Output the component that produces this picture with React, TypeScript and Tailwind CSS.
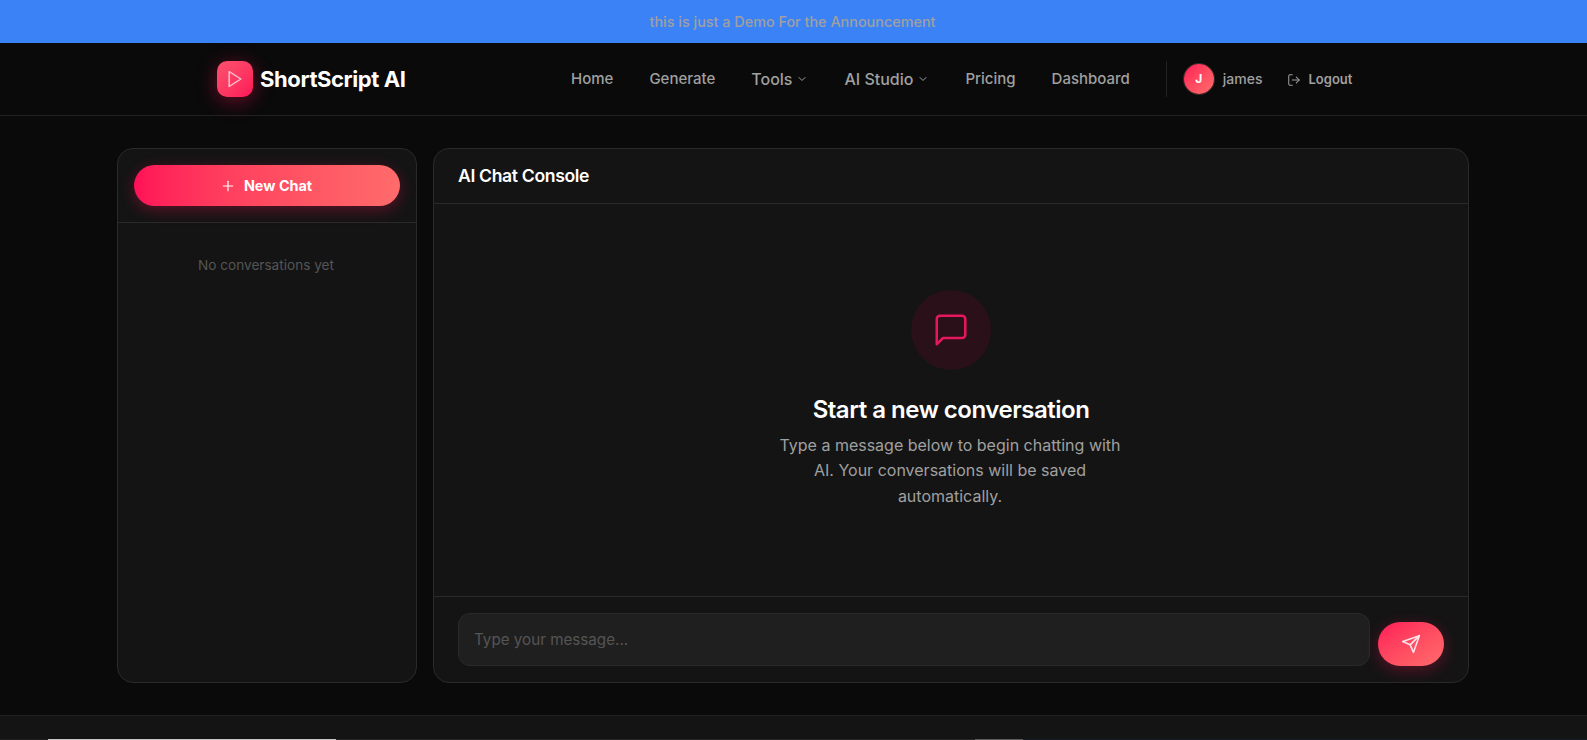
import { ChevronDown, LogOut, Plus } from "lucide-react";

const font = { fontFamily: "Inter, 'Liberation Sans', sans-serif" };

function NavLink({ label, menu, large }: { label: string; menu?: boolean; large?: boolean }) {
  return (
    <a className={`flex items-center gap-1 font-medium text-[#a0a0a0] ${large ? "text-[16px]" : "text-[15px]"}`}>
      {label}
      {menu && <ChevronDown size={12} strokeWidth={2} />}
    </a>
  );
}

export default function App() {
  return (
    <div style={font} className="h-[740px] overflow-hidden bg-[#0a0a0a] flex flex-col">
      <div className="h-[43px] shrink-0 bg-[#3b82f6] flex items-center justify-center text-[14.4px] font-medium text-[#a0a0a0] pr-0.5">
        this is just a Demo For the Announcement
      </div>
      <header className="h-[73px] shrink-0 border-b border-[#222222] flex items-center pl-[217px]">
        <div className="flex items-center gap-[7px] w-[354px]">
          <div className="w-9 h-9 rounded-[10px] bg-gradient-to-br from-[#f9506f] to-[#ff0f57] flex items-center justify-center shadow-[0_4px_20px_rgba(255,15,87,0.4)]">
            <svg width="20" height="20" viewBox="0 0 24 24" fill="none" stroke="#ffc4d0" strokeWidth="1.75" strokeLinejoin="round">
              <polygon points="5 3 19 12 5 21 5 3" />
            </svg>
          </div>
          <span className="text-[22px] font-bold text-white tracking-[-0.4px]">ShortScript AI</span>
        </div>
        <nav className="flex items-center gap-9">
          <NavLink label="Home" />
          <NavLink label="Generate" />
          <NavLink label="Tools" menu large />
          <NavLink label="AI Studio" menu large />
          <NavLink label="Pricing" />
          <NavLink label="Dashboard" />
        </nav>
        <div className="w-px h-9 bg-[#222222] ml-9 mr-[17px]" />
        <div className="w-[30px] h-[30px] rounded-full bg-gradient-to-br from-[#ff0f57] to-[#ff6b6b] ring-1 ring-[#3a2a2a] flex items-center justify-center text-white text-xs font-bold">
          J
        </div>
        <span className="ml-[9px] text-sm font-medium text-[#a0a0a0]">james</span>
        <a className="ml-[25px] flex items-center gap-[7px] text-[13px] font-semibold text-[#a0a0a0] pt-px">
          <LogOut size={14} strokeWidth={1.75} />
          Logout
        </a>
      </header>
      <main className="flex-1 min-h-0 flex gap-4 pt-[32px] pl-[117px] pr-[118px] pb-[32px]">
        <aside className="w-[300px] shrink-0 bg-[#141414] border border-[#2a2a2a] rounded-2xl flex flex-col">
          <div className="p-4 border-b border-[#2a2a2a]">
            <button className="w-full h-[41px] rounded-full bg-gradient-to-r from-[#ff0f57] to-[#ff6b6b] shadow-[0_4px_15px_rgba(255,15,87,0.3)] flex items-center justify-center gap-2 text-[14.4px] font-bold text-white pr-0.5">
              <Plus size={16} strokeWidth={1.75} />
              New Chat
            </button>
          </div>
          <p className="pt-8 pr-0.5 text-center text-[13.6px] text-[#555555]">No conversations yet</p>
        </aside>
        <section className="flex-1 min-w-0 bg-[#141414] border border-[#2a2a2a] rounded-2xl flex flex-col">
          <div className="h-[55px] shrink-0 px-6 flex items-center border-b border-[#2a2a2a]">
            <h2 className="text-[17.6px] font-semibold tracking-[-0.02em] text-white">AI Chat Console</h2>
          </div>
          <div className="flex-1 min-h-0 flex flex-col items-center pt-[86px]">
            <div className="w-20 h-20 rounded-full bg-[#2a1019] flex items-center justify-center">
              <svg width="38" height="38" viewBox="0 0 24 24" fill="none" stroke="#e6175c" strokeWidth="1.6" strokeLinecap="round" strokeLinejoin="round">
                <path d="M21 15a2 2 0 0 1-2 2H7l-4 4V5a2 2 0 0 1 2-2h14a2 2 0 0 1 2 2z" />
              </svg>
            </div>
            <h3 className="mt-6 text-2xl font-semibold tracking-[-0.02em] text-white">Start a new conversation</h3>
            <p className="mt-[6.6px] w-[350px] pr-0.5 text-center text-base leading-[25.6px] text-[#a0a0a0]">
              Type a message below to begin chatting with AI. Your conversations will be saved automatically.
            </p>
          </div>
          <div className="shrink-0 border-t border-[#2a2a2a] pt-4 pb-4 px-6 flex items-end gap-2">
            <div className="flex-1 h-[53px] rounded-xl bg-[#1f1f1f] border border-[#2a2a2a] pl-[15px] pr-4 pt-[15px] text-[15.2px] text-[#555555]">
              Type your message...
            </div>
            <button className="w-[66px] h-[44px] rounded-full bg-gradient-to-br from-[#ff0f57] to-[#ff6b6b] shadow-[0_4px_15px_rgba(255,15,87,0.3)] flex items-center justify-center">
              <svg width="20" height="20" viewBox="0 0 24 24" fill="none" stroke="#ffe4ea" strokeWidth="1.9" strokeLinecap="round" strokeLinejoin="round">
                <path d="m22 2-7 20-4-9-9-4Z" />
                <path d="M22 2 11 13" />
              </svg>
            </button>
          </div>
        </section>
      </main>
      <footer className="h-[25px] shrink-0 bg-[#141414] border-t border-[#222222] flex flex-col justify-end">
        <div className="flex h-px bg-[#262626]">
          <div className="w-12 bg-[#202020]" />
          <div className="w-[288px] bg-[#c8c8c8]" />
          <div className="w-[639px]" />
          <div className="w-12 bg-[#5c5c5c]" />
          <div className="flex-1 bg-[#181c24]" />
        </div>
      </footer>
    </div>
  );
}
